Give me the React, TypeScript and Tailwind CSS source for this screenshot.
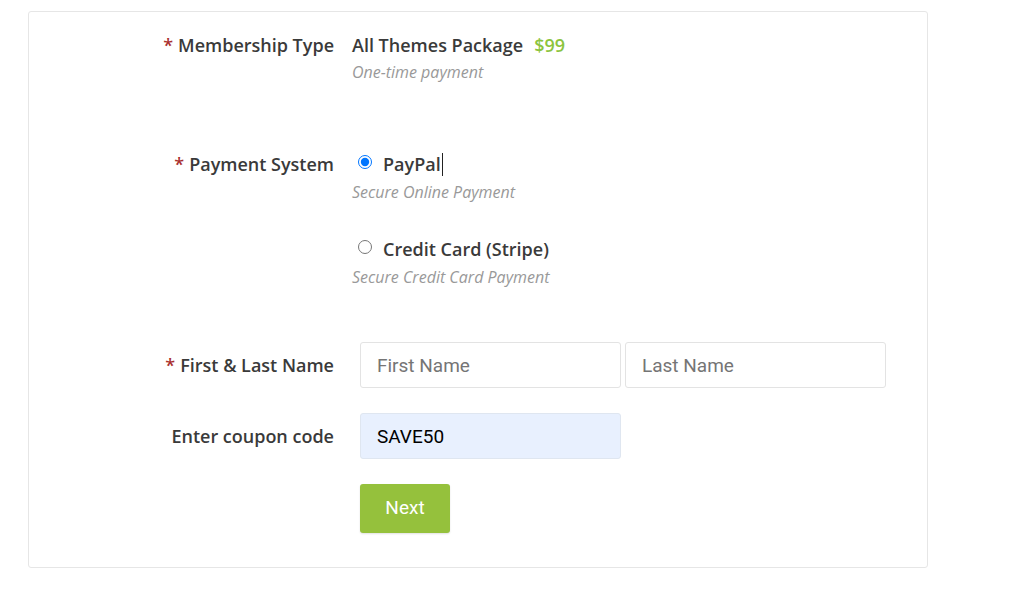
import { useState } from "react";

const Label = ({ text, required }: { text: string; required?: boolean }) => (
  <div className="text-right text-[18px] font-semibold text-[#3a3a3a] pr-[1px]">
    {required && <span className="text-[#a9302f] mr-[5px]">*</span>}
    {text}
  </div>
);

export default function App() {
  const [method, setMethod] = useState("paypal");

  return (
    <div className="w-[1025px] h-[602px] bg-white pt-[11px] pl-[28px] font-['Open_Sans',sans-serif]">
      <div className="w-[900px] h-[557px] border border-[#e6e6e6] rounded-[3px] pt-[21px]">
        {/* Membership */}
        <div className="grid grid-cols-[306px_1fr] gap-x-[17px]">
          <div className="leading-[24px]">
            <Label text="Membership Type" required />
          </div>
          <div>
            <div className="text-[18px] leading-[24px] font-semibold text-[#3a3a3a]">
              All Themes Package
              <span className="ml-[11px] text-[#8cc43e]">$99</span>
            </div>
            <div className="mt-[3px] text-[16px] leading-[24px] italic text-[#999]">One-time payment</div>
          </div>
        </div>

        {/* Payment */}
        <div className="grid grid-cols-[306px_1fr] gap-x-[17px] mt-[68px]">
          <div className="leading-[24px]">
            <Label text="Payment System" required />
          </div>
          <div className="flex flex-col">
            <label className="flex items-center h-[24px]">
              <input
                type="radio"
                name="pay"
                checked={method === "paypal"}
                onChange={() => setMethod("paypal")}
                className="w-[14px] h-[14px] ml-[6px] mr-[11px] -mt-[4px] accent-[#0075ff]"
              />
              <span className="text-[18px] font-semibold text-[#3a3a3a]">PayPal</span>
              <span className="w-px h-[23px] bg-[#222] ml-[1px]" />
            </label>
            <div className="mt-[4px] text-[16px] leading-[24px] italic text-[#999]">Secure Online Payment</div>

            <label className="flex items-center h-[24px] mt-[33px]">
              <input
                type="radio"
                name="pay"
                checked={method === "stripe"}
                onChange={() => setMethod("stripe")}
                className="w-[14px] h-[14px] ml-[6px] mr-[11px] -mt-[4px] accent-[#0075ff]"
              />
              <span className="text-[18px] font-semibold text-[#3a3a3a]">Credit Card (Stripe)</span>
            </label>
            <div className="mt-[4px] text-[16px] leading-[24px] italic text-[#999]">Secure Credit Card Payment</div>
          </div>
        </div>

        {/* Name */}
        <div className="grid grid-cols-[306px_1fr] gap-x-[17px] items-center mt-[53px]">
          <Label text="First & Last Name" required />
          <div className="flex gap-[4px] pl-[8px]">
            <input
              placeholder="First Name"
              className="w-[261px] h-[46px] border border-[#e3e3e3] rounded-[3px] pl-[16px] text-[19px] font-['Roboto',sans-serif] text-[#222] placeholder:text-[#757575] outline-none"
            />
            <input
              placeholder="Last Name"
              className="w-[261px] h-[46px] border border-[#e3e3e3] rounded-[3px] pl-[16px] text-[19px] font-['Roboto',sans-serif] text-[#222] placeholder:text-[#757575] outline-none"
            />
          </div>
        </div>

        {/* Coupon */}
        <div className="grid grid-cols-[306px_1fr] gap-x-[17px] items-center mt-[25px]">
          <Label text="Enter coupon code" />
          <div className="pl-[8px]">
            <input
              defaultValue="SAVE50"
              className="w-[261px] h-[46px] border border-[#dfe6f0] bg-[#e8f0fe] rounded-[3px] pl-[16px] text-[19px] font-['Roboto',sans-serif] text-black outline-none"
            />
          </div>
        </div>

        {/* Next */}
        <div className="grid grid-cols-[306px_1fr] gap-x-[17px] mt-[25px]">
          <div />
          <div className="pl-[8px]">
            <button className="w-[90px] h-[49px] rounded-[3px] bg-[#95c13c] text-white text-[19px] font-['Roboto',sans-serif] shadow-[0_1px_2px_rgba(0,0,0,0.12)]">
              Next
            </button>
          </div>
        </div>
      </div>
    </div>
  );
}
